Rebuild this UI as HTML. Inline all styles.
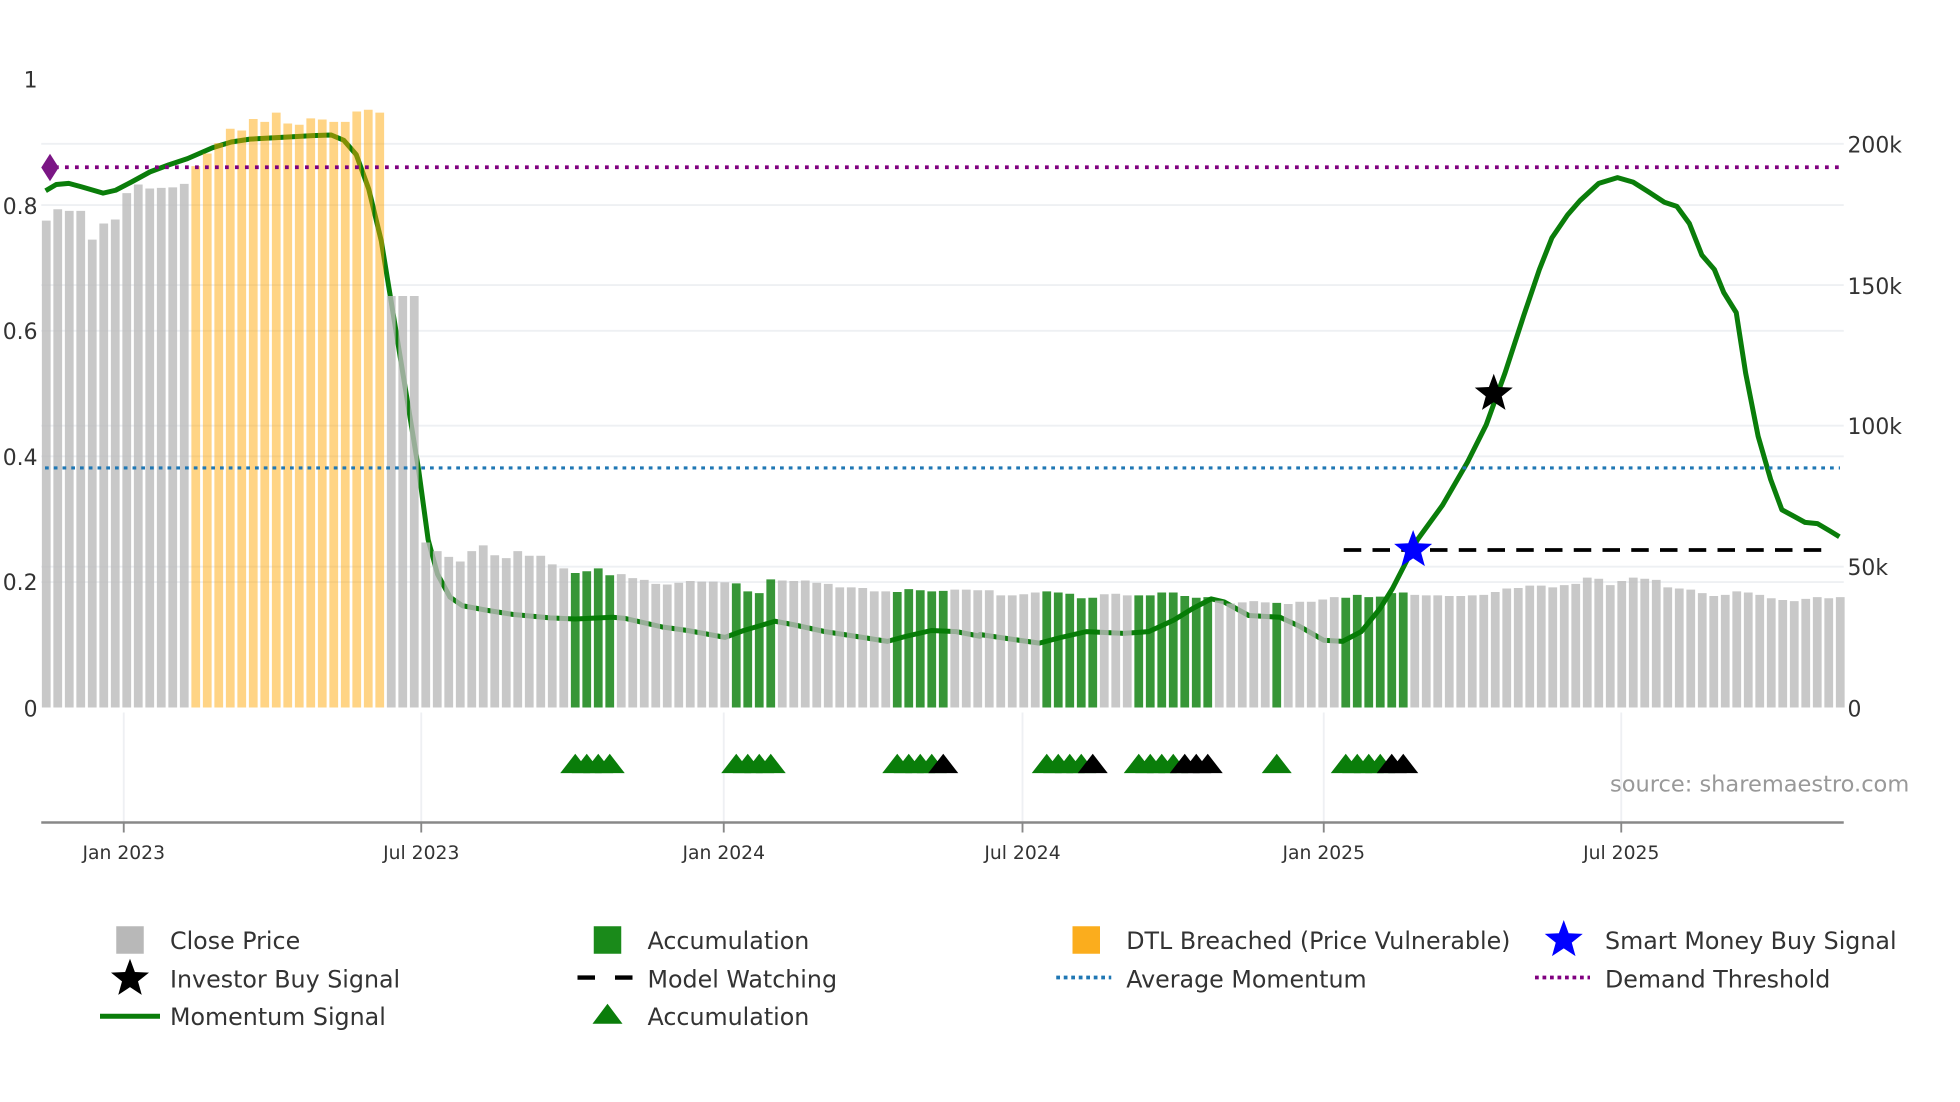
<!DOCTYPE html>
<html><head><meta charset="utf-8"><style>
html,body{margin:0;padding:0;background:#fff;}
svg{display:block;font-family:"DejaVu Sans","Liberation Sans",sans-serif;}
</style></head><body>
<svg id="s" width="1960" height="1102" viewBox="0 0 1568 881.6" xmlns="http://www.w3.org/2000/svg">
<g stroke="#eef0f3" stroke-width="1.5">
<line x1="33" x2="1475" y1="115" y2="115"/><line x1="33" x2="1475" y1="228" y2="228"/>
<line x1="33" x2="1475" y1="340.5" y2="340.5"/><line x1="33" x2="1475" y1="453.3" y2="453.3"/>
<line x1="33" x2="1475" y1="164" y2="164"/><line x1="33" x2="1475" y1="264.6" y2="264.6"/>
<line x1="33" x2="1475" y1="365" y2="365"/><line x1="33" x2="1475" y1="465.6" y2="465.6"/>
<line x1="99" x2="99" y1="570" y2="658"/><line x1="337" x2="337" y1="570" y2="658"/>
<line x1="579" x2="579" y1="570" y2="658"/><line x1="818" x2="818" y1="570" y2="658"/>
<line x1="1059" x2="1059" y1="570" y2="658"/><line x1="1297" x2="1297" y1="570" y2="658"/>
</g>
<g id="under"></g>
<g id="bars"></g>
<g id="over"></g>
<line x1="36" x2="1472" y1="374.3" y2="374.3" stroke="#1f77b4" stroke-width="2.5" stroke-dasharray="3,4"/>
<line x1="36" x2="1472" y1="133.8" y2="133.8" stroke="#800080" stroke-width="3" stroke-dasharray="3,5"/>
<polygon points="40,123 47,134 40,145 33,134" fill="#7b1685"/>
<line x1="1075" x2="1466" y1="440" y2="440" stroke="#000" stroke-width="3" stroke-dasharray="14,9"/>
<g id="tri"></g>
<g id="stars"></g>
<line x1="33" x2="1475" y1="658" y2="658" stroke="#888" stroke-width="2"/>
<g stroke="#888" stroke-width="1.5">
<line x1="99" x2="99" y1="658" y2="666"/><line x1="337" x2="337" y1="658" y2="666"/>
<line x1="579" x2="579" y1="658" y2="666"/><line x1="818" x2="818" y1="658" y2="666"/>
<line x1="1059" x2="1059" y1="658" y2="666"/><line x1="1297" x2="1297" y1="658" y2="666"/>
</g>
<g font-size="17.5" fill="#333" text-anchor="end">
<text x="30" y="70">1</text><text x="30" y="171">0.8</text><text x="30" y="271">0.6</text>
<text x="30" y="372">0.4</text><text x="30" y="472">0.2</text><text x="30" y="573">0</text>
</g>
<g font-size="17.5" fill="#333">
<text x="1478" y="122">200k</text><text x="1478" y="235">150k</text><text x="1478" y="347">100k</text>
<text x="1478" y="460">50k</text><text x="1478" y="573">0</text>
</g>
<g font-size="15" fill="#333" text-anchor="middle">
<text x="99" y="687">Jan 2023</text><text x="337" y="687">Jul 2023</text><text x="579" y="687">Jan 2024</text>
<text x="818" y="687">Jul 2024</text><text x="1059" y="687">Jan 2025</text><text x="1297" y="687">Jul 2025</text>
</g>
<text x="1288" y="633" font-size="18" fill="#999">source: sharemaestro.com</text>
<g font-size="19" fill="#333">
<rect x="93" y="741" width="22" height="22" fill="#b8b8b8"/><text x="136" y="759">Close Price</text>
<rect x="475" y="741" width="22" height="22" fill="#1a8a1a"/><text x="518" y="759">Accumulation</text>
<rect x="858" y="741" width="22" height="22" fill="#fbad1d"/><text x="901" y="759">DTL Breached (Price Vulnerable)</text>
<text x="1284" y="759">Smart Money Buy Signal</text>
<text x="136" y="790">Investor Buy Signal</text>
<line x1="462" x2="506" y1="782" y2="782" stroke="#000" stroke-width="3.5" stroke-dasharray="14,16"/><text x="518" y="790">Model Watching</text>
<line x1="845" x2="889" y1="782" y2="782" stroke="#1f77b4" stroke-width="3" stroke-dasharray="3,3"/><text x="901" y="790">Average Momentum</text>
<line x1="1228" x2="1272" y1="782" y2="782" stroke="#800080" stroke-width="3" stroke-dasharray="3,3"/><text x="1284" y="790">Demand Threshold</text>
<line x1="80" x2="128" y1="813" y2="813" stroke="#0a7d0a" stroke-width="4"/><text x="136" y="820">Momentum Signal</text>
<polygon points="486,803 498,819 474,819" fill="#0a7d0a"/><text x="518" y="820">Accumulation</text>
</g>
</svg>
<script>
var NS="http://www.w3.org/2000/svg";
function el(p,t,a){var e=document.createElementNS(NS,t);for(var k in a)e.setAttribute(k,a[k]);document.getElementById(p).appendChild(e);return e;}
function Y(z){return 566-(1232-z)*0.4598;}
var zy=[385,365,368,368,418,390,383,337,322,329,328,327,321,
290,268,250,225,228,208,213,197,216,218,207,209,213,213,195,192,197,
516,516,516,
945,960,970,978,960,950,967,972,960,968,968,983,990,
998,995,990,1002,
1000,1007,1010,1017,1018,1015,1012,1013,1013,1014,
1016,1030,1033,1009,
1011,1012,1011,1015,1017,1023,1023,1024,1030,1030,
1031,1026,1028,1030,1029,
1027,1027,1028,
1028,1037,1037,1035,1032,
1030,1032,1034,1042,1041,
1035,1034,1037,
1037,1037,1032,1032,1038,1041,1040,
1046,1051,1049,1047,1049,
1050,
1052,1048,1048,1044,1040,
1041,1036,1040,1039,1033,1032,
1036,1037,1037,1038,1038,1037,1036,1031,1025,1024,1020,1020,1023,1019,1017,1006,1008,1019,1012,1006,1008,1010,1023,1025,1027,1033,1038,1036,1030,1032,1036,1042,1045,1047,1043,1040,1042,1040];
var green=[46,47,48,49,60,61,62,63,74,75,76,77,78,87,88,89,90,91,95,96,97,98,99,100,101,107,113,114,115,116,117,118];
var black=[78,91,99,100,101,117,118];
function cx(i){return 37+i*9.2;}
var p1=[[73,333],[90,322],[110,320],[130,326],[165,337],[185,332],[210,318],[240,300],[270,288],[300,277],[340,258],[370,248],[400,243],[450,240],[500,237],[530,236],[550,245],[570,270],[590,330],[610,420],[625,520],[640,620],[655,720],[670,820],[685,940],[700,1000],[720,1040],[740,1055],[780,1063],[820,1070],[880,1076],[920,1078],[980,1075],[1000,1077],[1060,1092],[1100,1098],[1160,1110],[1190,1098],[1240,1082],[1270,1088],[1320,1100],[1380,1110],[1420,1117],[1450,1108],[1490,1098],[1530,1100],[1568,1108]];
var p2=[[0,1105],[50,1113],[95,1120],[130,1110],[170,1100],[230,1103],[270,1100],[310,1080],[340,1060],[370,1043],[390,1048],[430,1072],[480,1075],[510,1090],[550,1115],[580,1117],[610,1100],[640,1060],[660,1025],[700,940],[740,880],[780,805],[810,740],[840,650],[870,550],[895,470],[915,415],[940,375],[960,350],[990,320],[1020,310],[1045,318],[1070,335],[1095,353],[1115,360],[1135,390],[1155,445],[1175,470],[1190,510],[1210,545],[1225,650],[1245,760],[1265,835],[1283,888],[1300,898],[1320,910],[1340,912],[1360,925],[1375,935]];
var pts=[];p1.forEach(function(p){pts.push([p[0]*0.5,Y(p[1])]);});p2.forEach(function(p){pts.push([784+p[0]*0.5,Y(p[1])]);});
var d="M"+pts.map(function(p){return p[0].toFixed(1)+","+p[1].toFixed(1);}).join(" L");
el("under","path",{d:d,fill:"none",stroke:"#0a7d0a","stroke-width":4,"stroke-linejoin":"round"});
for(var i=0;i<zy.length;i++){
 var y=Y(zy[i]),c="#bababa",o=0.8;
 if(i>=13&&i<=29){c="#ffa500";o=0.48;}
 if(green.indexOf(i)>=0){c="#057c05";o=0.8;}
 el("bars","rect",{x:(cx(i)-3.5).toFixed(1),y:y.toFixed(1),width:7,height:(566-y).toFixed(1),fill:c,"fill-opacity":o});
}
green.forEach(function(i){if(black.indexOf(i)<0){var x=cx(i);el("tri","polygon",{points:(x)+",603 "+(x+12)+",618.5 "+(x-12)+",618.5",fill:"#0a7d0a"});}});
black.forEach(function(i){var x=cx(i);el("tri","polygon",{points:(x)+",603 "+(x+12)+",618.5 "+(x-12)+",618.5",fill:"#000"});});
function star(x,y,R,f){var s=[];for(var k=0;k<10;k++){var r=k%2?R*0.42:R;var a=-Math.PI/2+k*Math.PI/5;s.push((x+r*Math.cos(a)).toFixed(1)+","+(y+r*Math.sin(a)).toFixed(1));}el("stars","polygon",{points:s.join(" "),fill:f});}
star(1195,315,16,"#000");star(1130.5,440,16,"#0000ff");
star(104,783,16,"#000");star(1251,752,16,"#0000ff");
</script>
</body></html>
